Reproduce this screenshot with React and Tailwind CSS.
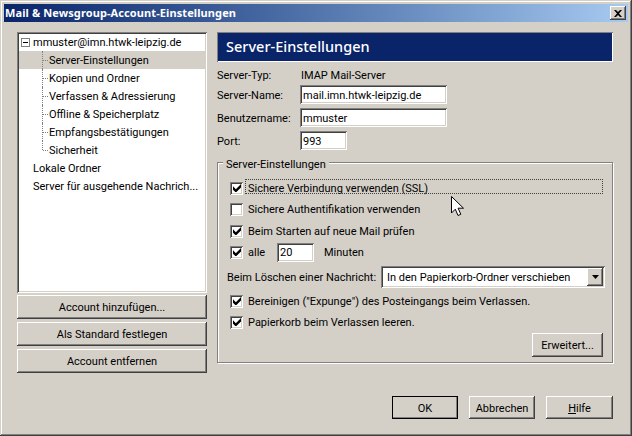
const raised = "shadow-[inset_-1px_-1px_0_#404040,inset_1px_1px_0_#fff,inset_-2px_-2px_0_#808080,inset_2px_2px_0_#d4d0c8]";
const sunken = "shadow-[inset_1px_1px_0_#808080,inset_-1px_-1px_0_#fff,inset_2px_2px_0_#404040,inset_-2px_-2px_0_#d4d0c8]";

function Txt({ className = "", children }) {
  return <span className={`block whitespace-nowrap pt-[2px] ${className}`}>{children}</span>;
}

function Btn({ className = "", children }) {
  return <div className={`flex items-center justify-center bg-[#d4d0c8] ${raised} ${className}`}>{children}</div>;
}

function Field({ className = "", children }) {
  return <div className={`flex items-center bg-white pl-[3px] ${sunken} ${className}`}><Txt>{children}</Txt></div>;
}

function Check({ checked }) {
  return (
    <span className={`flex h-[13px] w-[13px] shrink-0 items-center justify-center bg-white ${sunken}`}>
      {checked && (
        <svg width="8" height="8" viewBox="0 0 7 7">
          <path d="M0 2v3l2 2h1l4-4V0L2.5 4.5z" fill="#000" />
        </svg>
      )}
    </span>
  );
}

function CheckRow({ checked, children, className = "" }) {
  return (
    <div className={`flex h-[14px] items-center gap-[5px] pl-[12px] ${className}`}>
      <Check checked={checked} />
      <Txt>{children}</Txt>
    </div>
  );
}

function TreeChild({ label, selected, last }) {
  return (
    <div className={`relative flex h-[18px] items-center pl-[30px] ${selected ? "bg-[#d4d0c8]" : ""}`}>
      <span className={`absolute left-[23px] top-0 w-0 border-l border-dotted border-[#808080] ${last ? "h-[9px]" : "h-[18px]"}`} />
      <span className="absolute left-[24px] top-[9px] h-0 w-[5px] border-t border-dotted border-[#808080]" />
      <Txt>{label}</Txt>
    </div>
  );
}

export default function App() {
  return (
    <div className="h-[436px] w-[632px] overflow-hidden bg-[#d4d0c8] p-[4px] text-[11px] leading-[14px] text-black shadow-[inset_-1px_-1px_0_#404040,inset_1px_1px_0_#d4d0c8,inset_-2px_-2px_0_#808080,inset_2px_2px_0_#fff] [font-family:Roboto,sans-serif]">
      <div className="flex h-[18px] items-center justify-between bg-gradient-to-r from-[#0a246a] to-[#a6caf0] pl-[1px] pr-[2px] font-bold tracking-[0.1px] text-white [font-family:'Noto_Sans',sans-serif]">
        <span>Mail &amp; Newsgroup-Account-Einstellungen</span>
        <Btn className="h-[14px] w-[16px]">
          <svg width="8" height="7" viewBox="0 0 8 7">
            <path d="M0 0h2l2 2 2-2h2L5 3.5 8 7H6L4 5 2 7H0l3-3.5z" fill="#000" />
          </svg>
        </Btn>
      </div>

      <div className="relative flex gap-[10px] pl-[13px] pt-[10px]">
        <div className="w-[190px]">
          <div className={`h-[261px] bg-white px-[2px] pt-[1px] ${sunken}`}>
            <div className="relative flex h-[18px] items-center pl-[14px]">
              <span className="absolute left-[2px] top-[5px] flex h-[9px] w-[9px] items-center justify-center border border-[#808080] bg-white">
                <span className="h-px w-[5px] bg-black" />
              </span>
              <Txt>mmuster@imn.htwk-leipzig.de</Txt>
            </div>
            <TreeChild label="Server-Einstellungen" selected />
            <TreeChild label="Kopien und Ordner" />
            <TreeChild label="Verfassen & Adressierung" />
            <TreeChild label="Offline & Speicherplatz" />
            <TreeChild label="Empfangsbestätigungen" />
            <TreeChild label="Sicherheit" last />
            <div className="flex h-[18px] items-center pl-[14px]"><Txt>Lokale Ordner</Txt></div>
            <div className="flex h-[18px] items-center pl-[14px]"><Txt>Server für ausgehende Nachrich...</Txt></div>
          </div>
          <div className="mt-[2px] flex flex-col gap-[3px]">
            <Btn className="h-[24px]"><Txt>Account hinzufügen...</Txt></Btn>
            <Btn className="h-[24px]"><Txt>Als Standard festlegen</Txt></Btn>
            <Btn className="h-[24px]"><Txt>Account entfernen</Txt></Btn>
          </div>
        </div>

        <div className="w-[396px]">
          <div className="flex h-[30px] items-center bg-[#0a246a] pb-[2px] pl-[9px] text-[14.5px] font-medium text-white shadow-[inset_1px_1px_0_#808080,inset_-1px_-1px_0_#fff] [font-family:'Noto_Sans',sans-serif]">
            Server-Einstellungen
          </div>

          <div className="mt-[6px] flex h-[14px] items-center">
            <Txt className="w-[84px]">Server-Typ:</Txt>
            <Txt>IMAP Mail-Server</Txt>
          </div>
          <div className="mt-[3px] flex h-[19px] items-center">
            <Txt className="w-[83px]">Server-Name:</Txt>
            <Field className="h-[19px] w-[147px]">mail.imn.htwk-leipzig.de</Field>
          </div>
          <div className="mt-[4px] flex h-[19px] items-center">
            <Txt className="w-[83px]">Benutzername:</Txt>
            <Field className="h-[19px] w-[147px]">mmuster</Field>
          </div>
          <div className="mt-[4px] flex h-[19px] items-center">
            <Txt className="w-[83px]">Port:</Txt>
            <Field className="h-[19px] w-[47px]">993</Field>
          </div>

          <div className="relative mt-[12px] h-[201px] border border-[#808080] pt-[18px] shadow-[1px_1px_0_#fff,inset_1px_1px_0_#fff]">
            <span className="absolute left-[5px] top-[-5px] bg-[#d4d0c8] px-[3px]">Server-Einstellungen</span>

            <div className="relative">
              <CheckRow checked>Sichere Verbindung verwenden (SSL)</CheckRow>
              <span className="absolute left-[27px] top-[-2px] h-[15px] w-[358px] border border-dotted border-[#404040]" />
            </div>
            <CheckRow className="mt-[7px]">Sichere Authentifikation verwenden</CheckRow>
            <CheckRow checked className="mt-[8px]">Beim Starten auf neue Mail prüfen</CheckRow>
            <div className="mt-[4px] flex h-[20px] items-center pl-[12px]">
              <Check checked />
              <Txt className="ml-[5px] w-[29px]">alle</Txt>
              <Field className="h-[19px] w-[37px]">20</Field>
              <Txt className="ml-[10px]">Minuten</Txt>
            </div>
            <div className="mt-[4px] flex h-[22px] items-center pl-[9px]">
              <Txt className="w-[154px]">Beim Löschen einer Nachricht:</Txt>
              <div className={`flex h-[22px] w-[224px] items-center justify-between bg-white pl-[6px] pr-[2px] ${sunken}`}>
                <Txt>In den Papierkorb-Ordner verschieben</Txt>
                <Btn className="h-[18px] w-[16px]">
                  <svg width="7" height="4" viewBox="0 0 7 4"><path d="M0 0h7L3.500 4z" fill="#000" /></svg>
                </Btn>
              </div>
            </div>
            <CheckRow checked className="mt-[6px]">Bereinigen ("Expunge") des Posteingangs beim Verlassen.</CheckRow>
            <CheckRow checked className="mt-[7px]">Papierkorb beim Verlassen leeren.</CheckRow>
            <div className="mt-[4px] flex justify-end pr-[9px]">
              <Btn className="h-[24px] w-[71px]"><Txt>Erweitert...</Txt></Btn>
            </div>
          </div>

          <div className="mt-[33px] flex justify-end gap-[11px]">
            <Btn className="h-[23px] w-[66px] outline outline-1 -outline-offset-1 outline-black"><Txt>OK</Txt></Btn>
            <Btn className="h-[23px] w-[66px]"><Txt>Abbrechen</Txt></Btn>
            <Btn className="h-[23px] w-[67px]"><Txt><span className="underline">H</span>ilfe</Txt></Btn>
          </div>
        </div>

        <svg className="absolute left-[447px] top-[174px]" width="14" height="22" viewBox="0 0 14 22">
          <path d="M.5.5V17l3.800-3.800 2.700 6.300 2.800-1.200-2.700-6.100h5.400z" fill="#fff" stroke="#000" strokeWidth="1" />
        </svg>
      </div>
    </div>
  );
}
